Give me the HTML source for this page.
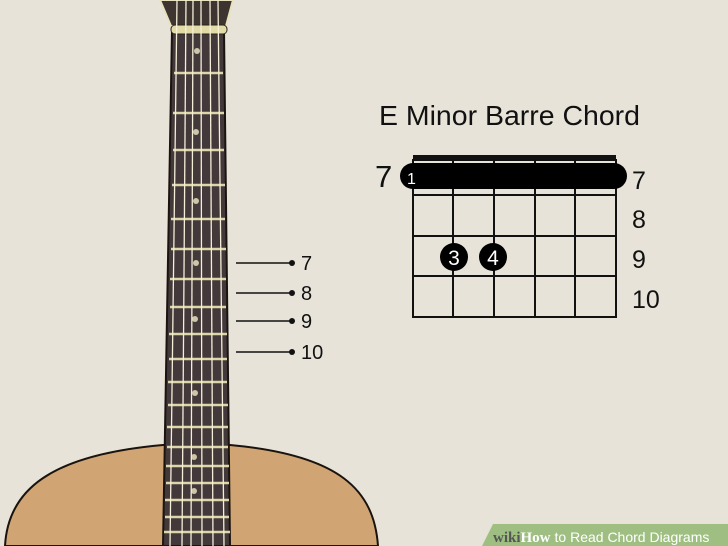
<!DOCTYPE html>
<html><head><meta charset="utf-8"><style>
html,body{margin:0;padding:0;}
body{width:728px;height:546px;overflow:hidden;background:#e7e3d8;position:relative;font-family:"Liberation Sans",sans-serif;}
svg{position:absolute;left:0;top:0;}
</style></head><body>
<svg width="728" height="546" viewBox="0 0 728 546">
<path d="M5,546 C8,490 50,455 163,445 L230,445 C340,455 374,490 378,546 Z" fill="#d1a573" stroke="#1a1410" stroke-width="2"/>
<path d="M160,0 L233,0 L226,26 L171,26 Z" fill="#3e3531" stroke="#e9e2bf" stroke-width="2"/>
<path d="M172,30 L224,30 L230,546 L163,546 Z" fill="#43393a" stroke="#1a1410" stroke-width="2"/>
<rect x="171" y="25" width="56" height="9" rx="4" fill="#e2dba6" stroke="#2a2420" stroke-width="1"/>
<g stroke="#ddd6a8" stroke-width="2.5">
<line x1="174" y1="73" x2="223" y2="73"/><line x1="173" y1="113" x2="224" y2="113"/>
<line x1="173" y1="150" x2="224" y2="150"/><line x1="172" y1="185" x2="225" y2="185"/>
<line x1="171" y1="219" x2="225" y2="219"/><line x1="171" y1="249" x2="226" y2="249"/>
<line x1="170" y1="279" x2="226" y2="279"/><line x1="170" y1="307" x2="226" y2="307"/>
<line x1="169" y1="334" x2="227" y2="334"/><line x1="169" y1="359" x2="227" y2="359"/>
<line x1="168" y1="382" x2="227" y2="382"/><line x1="168" y1="405" x2="228" y2="405"/>
<line x1="167" y1="427" x2="228" y2="427"/><line x1="167" y1="447" x2="228" y2="447"/>
<line x1="166" y1="466" x2="229" y2="466"/><line x1="166" y1="483" x2="229" y2="483"/>
<line x1="165" y1="500" x2="229" y2="500"/><line x1="165" y1="517" x2="229" y2="517"/>
<line x1="164" y1="532" x2="230" y2="532"/>
</g>
<g fill="#cfc5a8">
<circle cx="197" cy="51" r="3"/><circle cx="196" cy="132" r="3"/><circle cx="196" cy="201" r="3"/>
<circle cx="196" cy="263" r="3"/><circle cx="195" cy="319" r="3"/><circle cx="195" cy="393" r="3"/>
<circle cx="194" cy="457" r="3"/><circle cx="194" cy="491" r="3"/>
</g>
<g stroke="#f3efd9" stroke-width="1.3">
<line x1="177" y1="0" x2="170" y2="546"/><line x1="186" y1="0" x2="182" y2="546"/>
<line x1="193" y1="0" x2="191" y2="546"/><line x1="201" y1="0" x2="202" y2="546"/>
<line x1="210" y1="0" x2="213" y2="546"/><line x1="218" y1="0" x2="224" y2="546"/>
</g>
<g stroke="#111" stroke-width="1.5">
<line x1="236" y1="263" x2="291" y2="263"/><line x1="236" y1="293" x2="291" y2="293"/>
<line x1="236" y1="321" x2="291" y2="321"/><line x1="236" y1="352" x2="291" y2="352"/>
</g>
<g fill="#111"><circle cx="292" cy="263" r="3"/><circle cx="292" cy="293" r="3"/><circle cx="292" cy="321" r="3"/><circle cx="292" cy="352" r="3"/></g>
<g font-family="Liberation Sans, sans-serif" font-size="20" fill="#111">
<text x="301" y="270">7</text><text x="301" y="300">8</text><text x="301" y="328">9</text><text x="301" y="359">10</text>
</g>
<text x="379" y="125" font-size="28" fill="#111" textLength="261" lengthAdjust="spacingAndGlyphs">E Minor Barre Chord</text>
<rect x="413" y="155" width="203" height="5" fill="#111"/>
<g stroke="#111" stroke-width="2" fill="none">
<rect x="413" y="160" width="203" height="157"/>
<line x1="453" y1="160" x2="453" y2="317"/><line x1="494" y1="160" x2="494" y2="317"/>
<line x1="535" y1="160" x2="535" y2="317"/><line x1="575" y1="160" x2="575" y2="317"/>
<line x1="413" y1="195" x2="616" y2="195"/><line x1="413" y1="236" x2="616" y2="236"/>
<line x1="413" y1="276" x2="616" y2="276"/>
</g>
<rect x="400" y="163" width="227" height="26" rx="13" fill="#000"/>
<text x="407" y="184" font-size="16" fill="#fff">1</text>
<circle cx="454" cy="257" r="14" fill="#000"/><circle cx="493" cy="257" r="14" fill="#000"/>
<text x="454" y="265" font-size="21" fill="#fff" text-anchor="middle">3</text>
<text x="493" y="265" font-size="21" fill="#fff" text-anchor="middle">4</text>
<text x="375" y="187" font-size="31" fill="#111">7</text>
<g font-size="25" fill="#111">
<text x="632" y="189">7</text><text x="632" y="228">8</text><text x="632" y="268">9</text><text x="632" y="308">10</text>
</g>
<path d="M493,524 L728,524 L728,546 L482,546 Z" fill="#9fbf82"/>
<text x="493" y="542" font-family="Liberation Serif, serif" font-weight="bold" font-size="15" fill="#555">wiki<tspan fill="#fff">How</tspan><tspan font-family="Liberation Sans, sans-serif" font-weight="normal" font-size="14" fill="#fff" dx="4">to Read Chord Diagrams</tspan></text>
</svg>
</body></html>
